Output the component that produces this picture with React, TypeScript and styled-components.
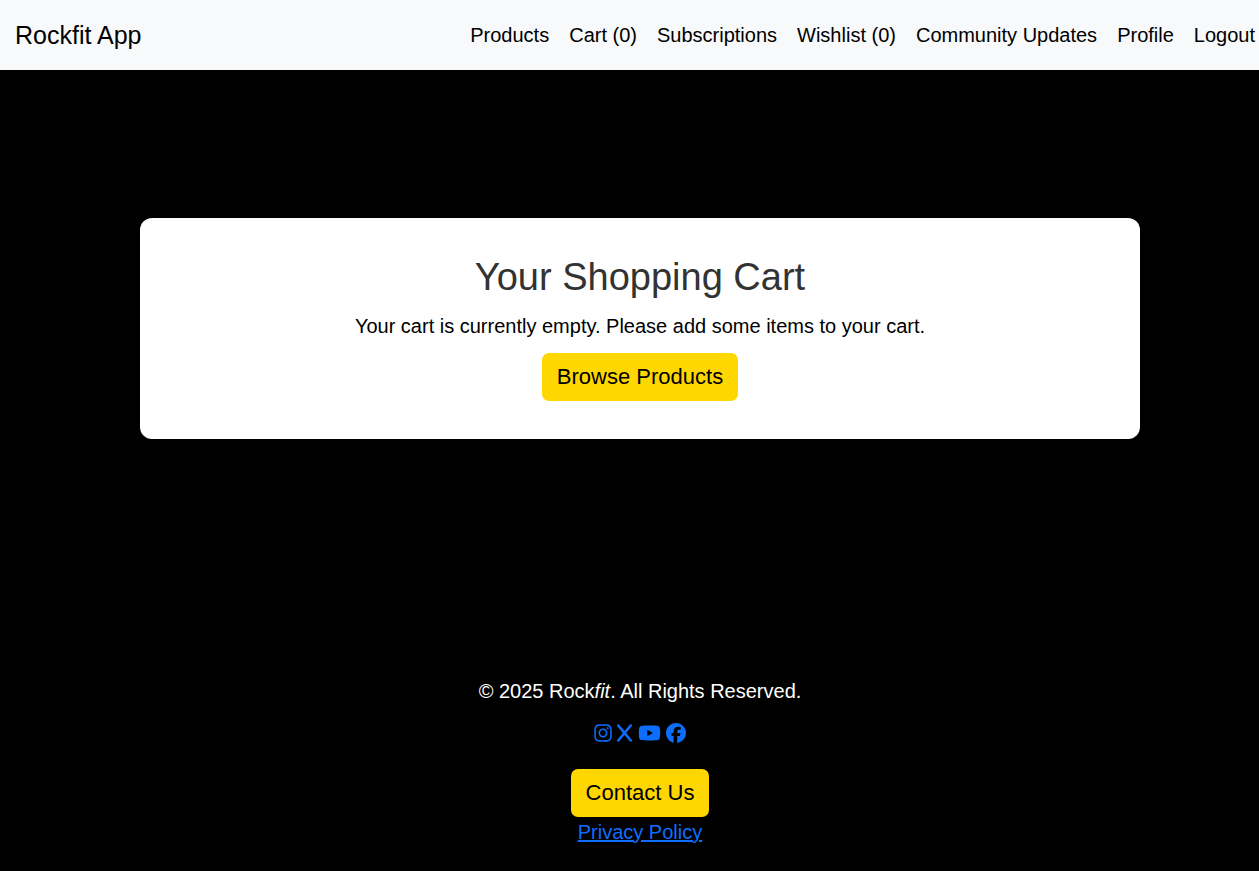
import React from "react";
import styled, { createGlobalStyle } from "styled-components";
import { FaFacebook, FaInstagram, FaX, FaYoutube } from "react-icons/fa6";

const GlobalStyle = createGlobalStyle`
  *, *::before, *::after { box-sizing: border-box; }
  body {
    margin: 0;
    background: #000;
    color: #000;
    font-family: "Liberation Sans", Arial, sans-serif;
    font-size: 20px;
    line-height: 30px;
  }
`;

const Page = styled.div`
  display: flex;
  flex-direction: column;
  min-height: 100vh;
`;

const Navbar = styled.header`
  display: flex;
  align-items: center;
  justify-content: space-between;
  min-height: 70px;
  padding: 0 4px 0 15px;
  background: #f8f9fa;
`;

const Brand = styled.a`
  color: #000;
  font-size: 25px;
  text-decoration: none;
  white-space: nowrap;
`;

const NavLinks = styled.nav`
  display: flex;
  flex-wrap: wrap;
  gap: 0 20px;
`;

const NavLink = styled.a`
  color: #000;
  text-decoration: none;
`;

const Main = styled.main`
  padding: 148px 0 148px 21px;
`;

const Card = styled.section`
  max-width: 1000px;
  margin: 0 auto;
  padding: 38px;
  border-radius: 12px;
  background: #fff;
  text-align: center;
`;

const Title = styled.h1`
  margin: 0 0 13px;
  color: #333;
  font-size: 38px;
  font-weight: 400;
  line-height: 42px;
`;

const Message = styled.p`
  margin: 0 0 12px;
`;

const ActionButton = styled.button`
  display: block;
  height: 48px;
  margin: 0 auto;
  padding: 0 15px;
  border: 0;
  border-radius: 7px;
  background: #ffd700;
  color: #000;
  font-family: inherit;
  font-size: 22px;
  cursor: pointer;
`;

const Footer = styled.footer`
  margin-top: auto;
  padding: 0 0 24px 21px;
  text-align: center;
`;

const Copyright = styled.p`
  margin: 0 0 12px;
  color: #fff;
`;

const Socials = styled.div`
  margin-bottom: 21px;
`;

const SocialLink = styled.a<{ $width: number }>`
  color: #0d6efd;

  svg {
    width: ${({ $width }) => $width}px;
    height: 20px;
    vertical-align: -3px;
  }
`;

const PolicyLink = styled.a`
  color: #0d6efd;
`;

const links = [
  "Products",
  "Cart (0)",
  "Subscriptions",
  "Wishlist (0)",
  "Community Updates",
  "Profile",
  "Logout",
];

export default function App() {
  return (
    <Page>
      <GlobalStyle />
      <Navbar>
        <Brand href="#home">Rockfit App</Brand>
        <NavLinks>
          {links.map((label) => (
            <NavLink key={label} href="#">
              {label}
            </NavLink>
          ))}
        </NavLinks>
      </Navbar>
      <Main>
        <Card>
          <Title>Your Shopping Cart</Title>
          <Message>
            Your cart is currently empty. Please add some items to your cart.
          </Message>
          <ActionButton type="button">Browse Products</ActionButton>
        </Card>
      </Main>
      <Footer>
        <Copyright>
          © 2025 Rock<em>fit</em>. All Rights Reserved.
        </Copyright>
        <Socials>
          <SocialLink $width={18} href="#" aria-label="Instagram"><FaInstagram /></SocialLink>{" "}
          <SocialLink $width={15} href="#" aria-label="X"><FaX /></SocialLink>{" "}
          <SocialLink $width={23} href="#" aria-label="YouTube"><FaYoutube /></SocialLink>{" "}
          <SocialLink $width={20} href="#" aria-label="Facebook"><FaFacebook /></SocialLink>
        </Socials>
        <ActionButton type="button">Contact Us</ActionButton>
        <PolicyLink href="#privacy">Privacy Policy</PolicyLink>
      </Footer>
    </Page>
  );
}
